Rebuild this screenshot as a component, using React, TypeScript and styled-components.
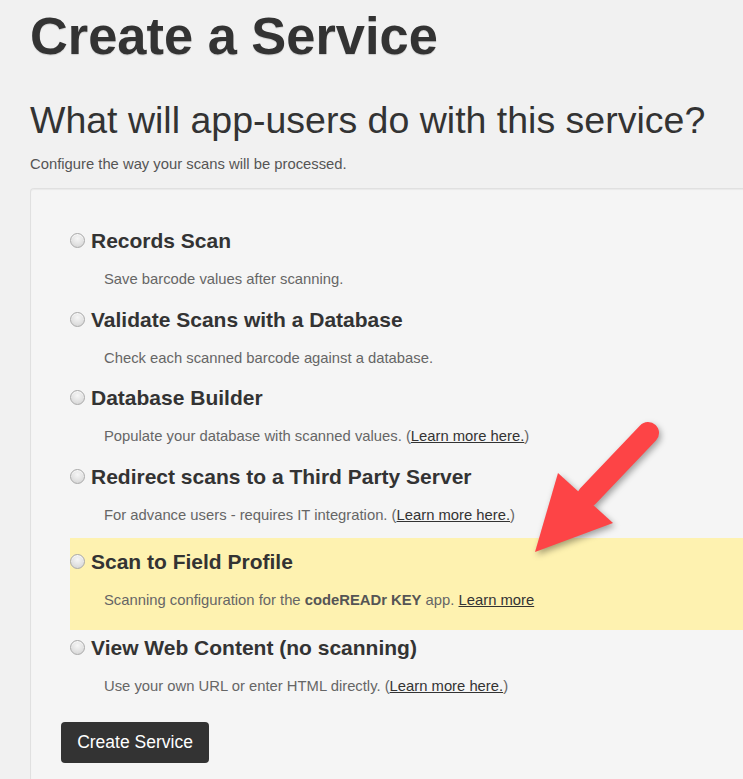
import React from "react";
import styled, { createGlobalStyle } from "styled-components";

const GlobalStyle = createGlobalStyle`
  html, body {
    margin: 0;
    padding: 0;
    background: #f1f1f1;
    overflow: hidden;
  }
  body {
    font-family: "Liberation Sans", Arial, sans-serif;
    color: #333;
  }
`;

const Page = styled.div`
  position: relative;
  width: 760px;
  height: 779px;
  padding-left: 30px;
  box-sizing: border-box;
  overflow: hidden;
`;

const Title = styled.h1`
  margin: 6px 0 0;
  font-size: 52.4px;
  line-height: 60px;
  font-weight: 700;
  color: #333;
  text-shadow: 0 1px 1px rgba(0, 0, 0, 0.15);
`;

const Heading = styled.h2`
  margin: 34px 0 0;
  font-size: 37.5px;
  line-height: 40px;
  font-weight: 400;
  color: #333;
`;

const Lead = styled.p`
  margin: 14px 0 0;
  font-size: 14.8px;
  line-height: 20px;
  color: #555;
`;

const Well = styled.div`
  margin-top: 14px;
  background: #f5f5f5;
  border: 1px solid #e0e0e0;
  border-right: none;
  border-radius: 4px 0 0 0;
  box-shadow: inset 0 1px 1px rgba(0, 0, 0, 0.05);
  padding: 40px 0 40px 30px;
  min-height: 600px;
`;

const OptionList = styled.div`
  display: flex;
  flex-direction: column;
  margin-left: 9px;
`;

const Option = styled.div<{ $highlight?: boolean }>`
  display: flex;
  flex-direction: column;
  margin-top: ${(p) => (p.$highlight ? "13px" : "18.5px")};
  margin-bottom: ${(p) => (p.$highlight ? "-12.5px" : "0")};
  padding: ${(p) => (p.$highlight ? "12px 0 20px" : "0")};
  background: ${(p) => (p.$highlight ? "#fef2b0" : "transparent")};
  &:first-child {
    margin-top: 0;
  }
`;

const OptionLabel = styled.label`
  display: flex;
  align-items: center;
  gap: 6px;
  font-size: 21px;
  line-height: 24px;
  font-weight: 700;
  color: #333;
`;

const Radio = styled.span`
  width: 13px;
  height: 13px;
  border-radius: 50%;
  border: 1px solid #a9a9a9;
  background: radial-gradient(circle at 50% 35%, #f6f6f6 0%, #e2e2e2 55%, #cfcfcf 100%);
  box-shadow: inset 0 1px 1px rgba(255, 255, 255, 0.8);
  flex: none;
  margin-top: -1px;
`;

const Description = styled.p`
  margin: 16px 0 0 34px;
  font-size: 14.8px;
  line-height: 20px;
  color: #666;
  white-space: nowrap;
  b {
    color: #555;
  }
`;

const Link = styled.a`
  color: #333;
  text-decoration: underline;
`;

const Button = styled.button`
  align-self: flex-start;
  margin-top: 26px;
  width: 148px;
  height: 41px;
  border: none;
  border-radius: 4px;
  background: #333;
  color: #fff;
  font-family: "Liberation Sans", Arial, sans-serif;
  font-size: 17.5px;
  padding: 0;
`;

const Form = styled.div`
  display: flex;
  flex-direction: column;
`;

const ArrowSvg = styled.svg`
  position: absolute;
  left: 520px;
  top: 410px;
  overflow: visible;
  filter: drop-shadow(2px 3px 3px rgba(0, 0, 0, 0.35));
`;

type Opt = {
  title: string;
  desc: React.ReactNode;
  highlight?: boolean;
};

const options: Opt[] = [
  { title: "Records Scan", desc: "Save barcode values after scanning." },
  { title: "Validate Scans with a Database", desc: "Check each scanned barcode against a database." },
  {
    title: "Database Builder",
    desc: (
      <>
        Populate your database with scanned values. (<Link href="#">Learn more here.</Link>)
      </>
    ),
  },
  {
    title: "Redirect scans to a Third Party Server",
    desc: (
      <>
        For advance users - requires IT integration. (<Link href="#">Learn more here.</Link>)
      </>
    ),
  },
  {
    title: "Scan to Field Profile",
    highlight: true,
    desc: (
      <>
        Scanning configuration for the <b>codeREADr KEY</b> app. <Link href="#">Learn more</Link>
      </>
    ),
  },
  {
    title: "View Web Content (no scanning)",
    desc: (
      <>
        Use your own URL or enter HTML directly. (<Link href="#">Learn more here.</Link>)
      </>
    ),
  },
];

export default function App() {
  return (
    <Page>
      <GlobalStyle />
      <Title>Create a Service</Title>
      <Heading>What will app-users do with this service?</Heading>
      <Lead>Configure the way your scans will be processed.</Lead>
      <Well>
        <Form>
          <OptionList>
            {options.map((o) => (
              <Option key={o.title} $highlight={o.highlight}>
                <OptionLabel>
                  <Radio />
                  {o.title}
                </OptionLabel>
                <Description>{o.desc}</Description>
              </Option>
            ))}
          </OptionList>
          <Button>Create Service</Button>
        </Form>
      </Well>
      <ArrowSvg width="150" height="160" viewBox="0 0 150 160">
        <line x1="128" y1="23" x2="68" y2="86" stroke="#fd4446" strokeWidth="22" strokeLinecap="round" />
        <polygon points="38,63 93,113 15,142" fill="#fd4446" />
      </ArrowSvg>
    </Page>
  );
}
